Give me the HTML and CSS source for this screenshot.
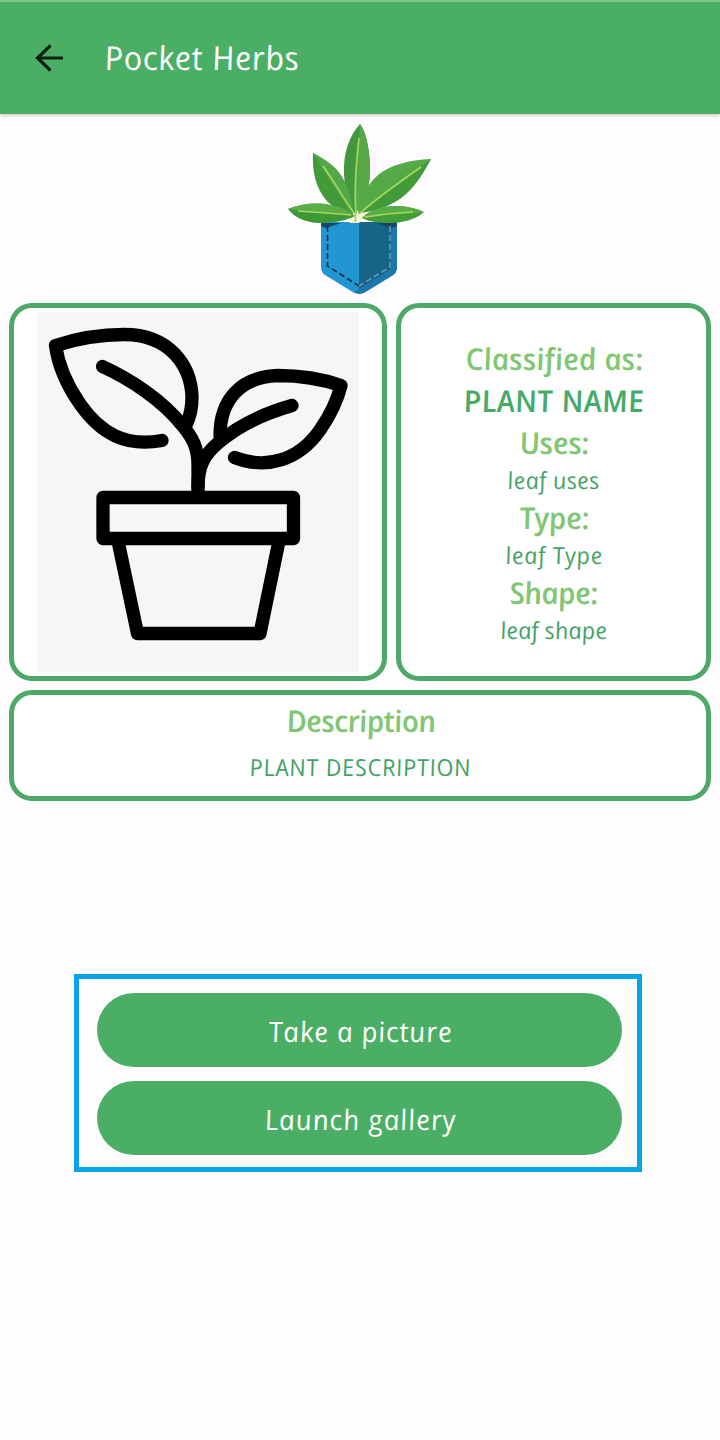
FILE: index.html
```html
<!DOCTYPE html>
<html lang="en">
<head>
<meta charset="utf-8">
<title>Pocket Herbs</title>
<link rel="stylesheet" href="styles.css">
</head>
<body>
<header class="app-bar">
  <svg class="back" width="30" height="30" viewBox="34 43 30 30"><path d="M63 58H38M50.500 45.500L37.500 58L50.500 70.500" fill="none" stroke="#10200f" stroke-width="3.200"/></svg>
  <h1 class="title"><span class="hand t-title">Pocket Herbs</span></h1>
</header>
<main class="content">
  <svg class="logo" width="160" height="180" viewBox="280 118 160 180">
    <path d="M321 222H359V294Q355 294 351 291L325 275Q321 272 321 267Z" fill="#2196d3"/>
    <path d="M359 222H397V267Q397 272 393 275L367 291Q363 294 359 294Z" fill="#176489"/>
    <path d="M391 223H397V267Q397 272 393 275L367 291Q363 294 359 294L354 292L391 269Z" fill="#1b78ae"/>
    <path d="M321 223H341L326 228L321 226ZM377 223H397V226L391 228Z" fill="#174764"/>
    <path d="M327.500 226V266L359 286" fill="none" stroke="#102d43" stroke-width="1.600" stroke-dasharray="6 3"/>
    <path d="M390 226V267L359 286" fill="none" stroke="#6997ae" stroke-width="1.600" stroke-dasharray="6 3"/>
    <path d="M347 214L371 213L365 218L359 223H350Z" fill="#f4f5d2"/>
    <path d="M360 124C349 136 343 154 344 174C345 194 350 206 355 214C366 202 371 184 370 164C369 147 366 132 360 124Z" fill="#43983e"/>
    <path d="M360 124C358 153 355 180 356 213C366 202 371 184 370 164C369 147 366 132 360 124Z" fill="#56a946"/>
    <path d="M313 153C312 172 316 188 326 200C334 209 344 213 353 214C352 195 345 179 336 169C328 161 320 157 313 153Z" fill="#419b39"/>
    <path d="M313 153C327 175 340 197 353 214C352 195 345 179 336 169C328 161 320 157 313 153Z" fill="#54a748"/>
    <path d="M431 159C409 160 390 165 378 175C366 185 361 199 358 213C380 211 398 203 411 189C420 179 426 168 431 159Z" fill="#56a947"/>
    <path d="M431 159C407 178 382 194 358 213C380 211 398 203 411 189C420 179 426 168 431 159Z" fill="#419b38"/>
    <path d="M288 209C300 204 316 202 330 205C341 207 350 211 355 216C345 221 333 223 318 223C304 222 294 217 288 209Z" fill="#3f9838"/>
    <path d="M288 209C300 204 316 202 330 205C341 207 350 211 355 216C333 212 311 212 288 209Z" fill="#59ae48"/>
    <path d="M424 212C411 206 397 205 384 207C374 209 367 213 362 218C369 222 380 223 393 223C408 222 419 217 424 212Z" fill="#459d38"/>
    <path d="M424 212C411 206 397 205 384 207C374 209 367 213 362 218C386 215 405 213 424 212Z" fill="#58ad47"/>
    <path d="M359 138C356 164 354 190 356 214M323 166C334 181 345 201 354 213M421 167C401 181 377 198 359 214M298 211Q327 213 351 215M365 217Q389 213 413 212M356 213L355 222" fill="none" stroke="#a6d75b" stroke-width="1.700"/>
  </svg>
  <section class="cards">
    <div class="card photo">
      <svg class="plant" width="322" height="360" viewBox="37 312 322 360" fill="none" stroke="#000" stroke-width="13.300" stroke-linecap="round" stroke-linejoin="round">
        <path d="M162 440.500C126 447 101 434 80 404C66 384 58 363 55.500 345.500C82 337 105 334.500 124 334.500C170 334.500 191 366 192 397C192 410 189 419 186 425"/>
        <path d="M102.500 366.500C132 380 163 401 182 425C193 438 198 448 198 465V491"/>
        <path d="M234.500 457.500C267 470 299 460 320 430C331 414 338 398 341 385.500C319 378 297 375.500 278 375.500C239 377 220 401 220 436"/>
        <path d="M292 405.500C262 414 239 425 218 443C204 455 198 466 198 487"/>
        <path d="M103 497.500H293.500V538.500H103ZM118 541L137.500 633.500H260L279 541"/>
      </svg>
    </div>
    <div class="card facts">
      <div class="head"><span class="hand t-class">Classified as:</span></div>
      <div class="head name"><span class="hand t-name">PLANT NAME</span></div>
      <div class="head"><span class="hand t-uses">Uses:</span></div>
      <div class="value"><span class="hand t-luses">leaf uses</span></div>
      <div class="head"><span class="hand t-type">Type:</span></div>
      <div class="value"><span class="hand t-ltype">leaf Type</span></div>
      <div class="head"><span class="hand t-shape">Shape:</span></div>
      <div class="value"><span class="hand t-lshape">leaf shape</span></div>
    </div>
    <div class="card description">
      <div class="head"><span class="hand t-desc">Description</span></div>
      <div class="value"><span class="hand t-pdesc">PLANT DESCRIPTION</span></div>
    </div>
  </section>
  <section class="actions">
    <button class="action"><span class="hand t-take">Take a picture</span></button>
    <button class="action"><span class="hand t-launch">Launch gallery</span></button>
  </section>
</main>
</body>
</html>
```
FILE: styles.css
```css
* { box-sizing: border-box; }
body { margin: 0; min-height: 1440px; background: #fefcfe; font-family: "Open Sans", "Noto Sans", sans-serif; }
/* Counter-skewed italics give upright letters with single-storey forms */
.hand { display: inline-block; font-style: italic; transform: skewX(10deg); white-space: nowrap; }
.t-title { letter-spacing: .45px; }
.t-name { letter-spacing: .4px; }
.t-uses, .t-type { letter-spacing: -.4px; }
.t-luses { letter-spacing: .25px; }
.t-ltype { letter-spacing: .6px; }
.t-shape, .t-desc { letter-spacing: -.65px; }
.t-pdesc { letter-spacing: .68px; }
.t-take { letter-spacing: .7px; }
.t-launch { letter-spacing: .85px; }
.app-bar { height: 114px; display: flex; align-items: center; padding: 0 0 0 34px; background: #4aae64; border-top: 2px solid #7fc77f; box-shadow: 0 1px 4px rgba(0,0,0,.25); }
.back { display: block; }
.title { margin: 0 0 0 40px; font-size: 33px; line-height: 44px; font-weight: 500; color: #fff; }
.content { display: flex; flex-direction: column; align-items: center; padding-top: 4px; }
.logo { display: block; }
.cards { width: 702px; margin-top: 5px; display: grid; grid-template-columns: 378px 315px; gap: 9px; }
.card { border: 5px solid #4ea968; border-radius: 23px; background: #fff; }
.photo { height: 378px; padding: 4px 0 0 23px; }
.plant { display: block; background: #f6f6f6; }
.facts { display: flex; flex-direction: column; justify-content: center; align-items: center; }
.head { height: 42px; line-height: 42px; font-size: 30px; font-weight: 600; color: #80c673; }
.name { color: #46aa68; }
.value { height: 33px; line-height: 33px; font-size: 23.500px; color: #46a367; }
.description { grid-column: 1 / 3; height: 111px; display: flex; flex-direction: column; align-items: center; padding-top: 5px; }
.description .value { margin-top: 9px; }
.actions { width: 568px; height: 198px; margin: 173px 4px 0 0; border: 5px solid #08a3e8; padding: 14px 15px 12px 18px; display: flex; flex-direction: column; gap: 14px; }
.action { height: 74px; flex: none; border: 0; border-radius: 37px; background: #4aae64; color: #fff; font: 600 28px "Open Sans", "Noto Sans", sans-serif; padding: 1px 0 0; }
.action .hand { font-weight: 500; }
```
